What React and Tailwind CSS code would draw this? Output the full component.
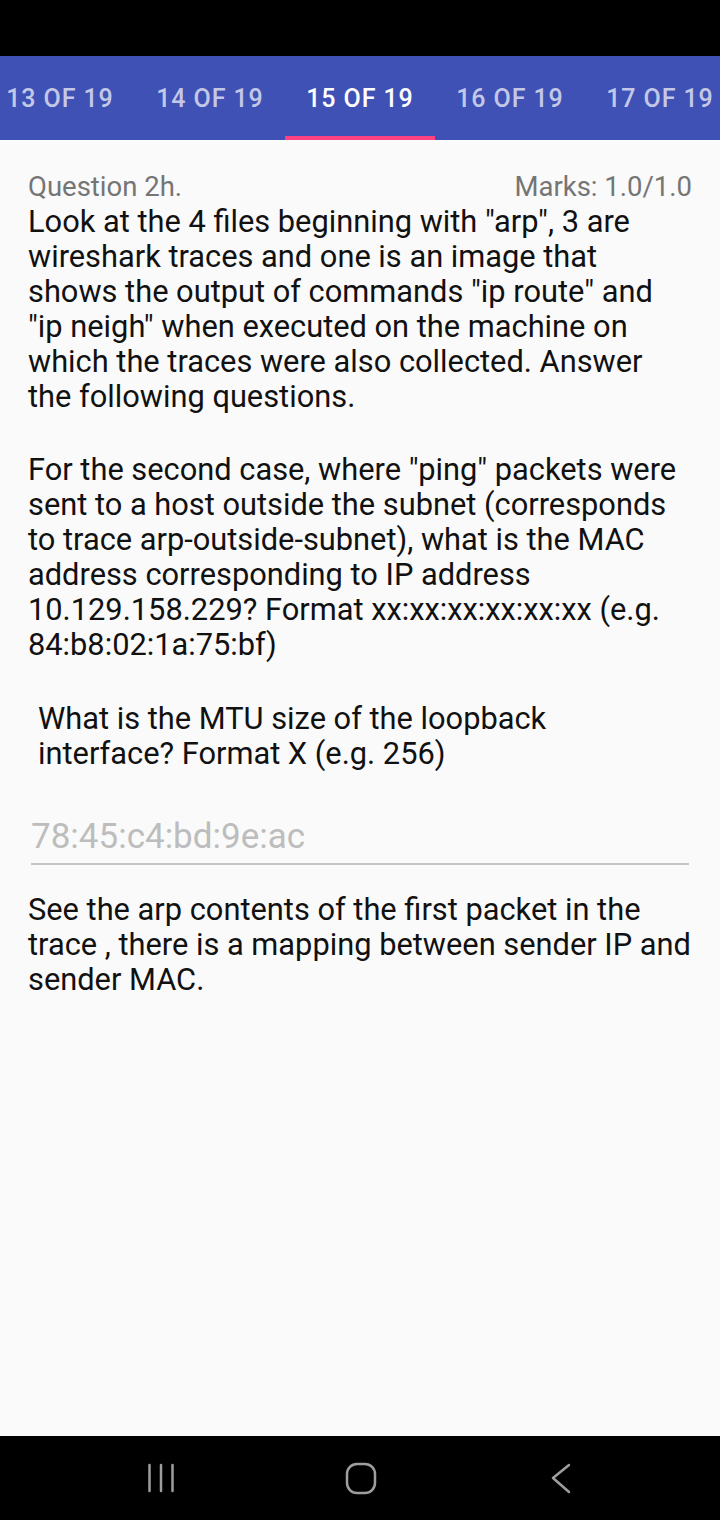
const tabs = ['13 OF 19', '14 OF 19', '15 OF 19', '16 OF 19', '17 OF 19'];

export default function App() {
  return (
    <div className="w-[720px] h-[1520px] flex flex-col bg-[#fafafa] font-['Roboto',sans-serif]">
      {/* status bar */}
      <div className="h-[56px] bg-black shrink-0" />

      {/* tabs */}
      <div className="h-[84px] bg-[#3f51b5] shrink-0 flex overflow-hidden">
        <div className="flex -ml-[15px]">
          {tabs.map((t, i) => (
            <div
              key={t}
              className={`w-[150px] shrink-0 flex flex-col ${i === 2 ? 'text-white' : 'text-white/70'}`}
            >
              <div className="flex-1 flex items-center justify-center text-[25px] tracking-[0.9px] font-medium pt-[6px]">{t}</div>
              <div className={`h-[4px] ${i === 2 ? 'bg-[#ff4081]' : ''}`} />
            </div>
          ))}
        </div>
      </div>

      {/* content */}
      <div className="flex-1 pt-[29px] pl-[28px] pr-[28px] text-[30.8px] leading-[35px] text-[#111]">
        <div className="flex justify-between text-[#757575] text-[27.5px]">
          <span>Question 2h.</span>
          <span>Marks: 1.0/1.0</span>
        </div>
        <p>
          Look at the 4 files beginning with "arp", 3 are wireshark traces and one is an image that shows the output of commands "ip route" and "ip neigh" when executed on the machine on which the traces were also collected. Answer the following questions.
        </p>
        <p className="mt-[38px]">
          For the second case, where "ping" packets were sent to a host outside the subnet (corresponds to trace arp-outside-subnet), what is the MAC address corresponding to IP address 10.129.158.229? Format xx:xx:xx:xx:xx:xx (e.g. 84:b8:02:1a:75:bf)
        </p>
        <p className="mt-[39px] px-[10px]">
          What is the MTU size of the loopback interface? Format X (e.g. 256)
        </p>
        <div className="mt-[46px] ml-[3px] mr-[3px] border-b-2 border-[#c4c4c4] pb-[6px] text-[35px] leading-[40px] text-[#bdbdbd]">
          78:45:c4:bd:9e:ac
        </div>
        <p className="mt-[27px]">
          See the arp contents of the first packet in the trace , there is a mapping between sender IP and sender MAC.
        </p>
      </div>

      {/* nav bar */}
      <div className="h-[84px] bg-black shrink-0 flex items-center pl-[61px]">
        <div className="w-[200px] flex justify-center">
          <svg width="40" height="40" viewBox="0 0 40 40" fill="none" stroke="#9e9e9e" strokeWidth="2.5" strokeLinecap="round">
            <path d="M8.5 7v26M20 7v26M31.5 7v26" />
          </svg>
        </div>
        <div className="w-[200px] flex justify-center">
          <svg width="40" height="40" viewBox="0 0 40 40" fill="none" stroke="#9e9e9e" strokeWidth="2.5">
            <rect x="6" y="6" width="28" height="29" rx="10" />
          </svg>
        </div>
        <div className="w-[200px] flex justify-center">
          <svg width="40" height="40" viewBox="0 0 40 40" fill="none" stroke="#9e9e9e" strokeWidth="2.5" strokeLinecap="round" strokeLinejoin="round">
            <path d="M28 7l-16 13 16 14" />
          </svg>
        </div>
      </div>
    </div>
  );
}
